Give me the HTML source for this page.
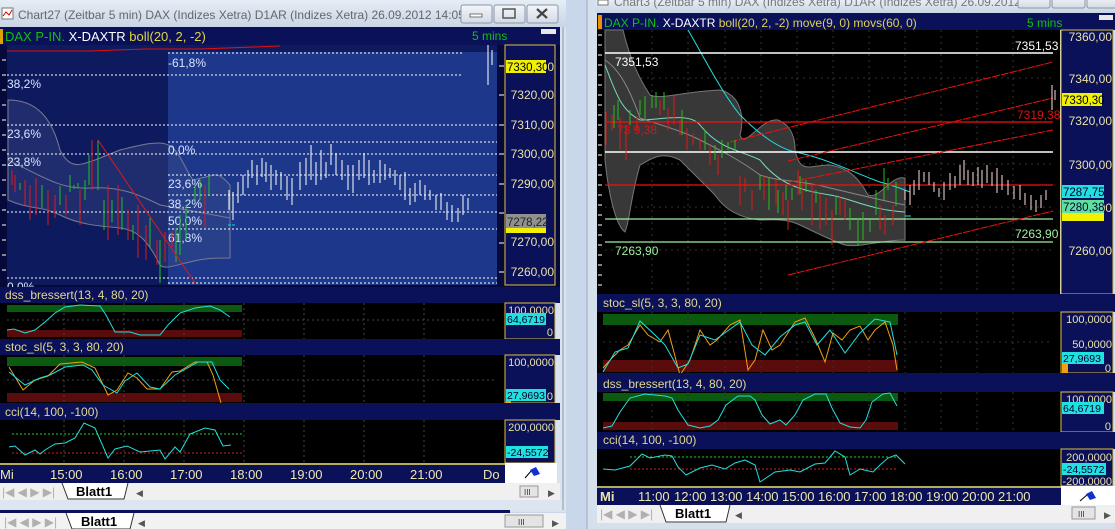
<!DOCTYPE html>
<html><head><meta charset="utf-8"><style>
html,body{margin:0;padding:0;width:1115px;height:529px;overflow:hidden;background:#c9d8ea}
svg{display:block}
text{font-family:"Liberation Sans",sans-serif}
</style></head><body>
<svg width="1115" height="529" viewBox="0 0 1115 529" xmlns="http://www.w3.org/2000/svg">
<defs>
<linearGradient id="tb" x1="0" y1="0" x2="0" y2="1"><stop offset="0" stop-color="#e6edf5"/><stop offset="1" stop-color="#c8d5e5"/></linearGradient>
<linearGradient id="btn" x1="0" y1="0" x2="0" y2="1"><stop offset="0" stop-color="#f4f6f9"/><stop offset="1" stop-color="#d3dbe6"/></linearGradient>
</defs>
<rect x="0" y="0" width="1115" height="529" fill="#c8d7ea"/>

<!-- ============ LEFT WINDOW ============ -->
<rect x="0" y="0" width="566" height="512" fill="#d9e3ef"/>
<rect x="0" y="0" width="566" height="27" fill="url(#tb)"/>
<rect x="2" y="8" width="11" height="11" fill="#fff" stroke="#777"/>
<path d="M3 16 L6 12 L9 15 L12 10" stroke="#c00" fill="none"/>
<text x="18" y="19" font-size="12" fill="#666">Chart27 (Zeitbar 5 min)  DAX (Indizes Xetra) D1AR (Indizes Xetra) 26.09.2012 14:05 ...</text>
<rect x="461" y="5" width="31" height="18" rx="2" fill="url(#btn)" stroke="#8a97a8"/>
<rect x="470" y="14" width="12" height="3" fill="#fff" stroke="#555" stroke-width="0.8"/>
<rect x="494" y="5" width="31" height="18" rx="2" fill="url(#btn)" stroke="#8a97a8"/>
<rect x="503" y="9" width="12" height="9" fill="none" stroke="#555" stroke-width="1.5"/>
<rect x="527" y="5" width="31" height="18" rx="2" fill="url(#btn)" stroke="#8a97a8"/>
<path d="M537 9 L547 18 M547 9 L537 18" stroke="#444" stroke-width="2.2"/>

<rect x="0" y="27" width="560" height="18" fill="#0b1158"/>
<rect x="0" y="29" width="3" height="15" fill="#e0a000"/>
<text x="5" y="41" font-size="13"><tspan fill="#10c010">DAX P-IN. </tspan><tspan fill="#ffffff">X-DAXTR </tspan><tspan fill="#e0d448">boll(20, 2, -2)</tspan></text>
<text x="472" y="40" font-size="12" fill="#10c010">5 mins</text>
<rect x="541" y="29" width="15" height="5" fill="#e8e8e8"/>

<rect x="0" y="45" width="560" height="242" fill="#060a3a"/>
<rect x="7" y="45" width="490" height="240" fill="#0e1a5e"/>
<rect x="168" y="52" width="329" height="233" fill="#1d388a"/>
<path d="M2 60h4M2 75h4M2 90h4M2 105h4M2 120h4M2 135h4M2 150h4M2 165h4M2 180h4M2 195h4M2 210h4M2 225h4M2 240h4M2 255h4M2 270h4" stroke="#fff"/>
<path d="M8 100 C30 100 50 110 60 150 C70 170 80 165 95 160 L120 150 C140 145 160 140 168 145 C180 150 185 170 193 180 L210 176 C220 172 225 180 230 185 L230 258 C215 258 205 258 190 262 C175 265 165 270 160 265 C150 245 140 230 120 228 C100 226 80 225 60 215 C40 205 30 210 8 200 Z" fill="#3a4a8a" fill-opacity="0.4" stroke="#7a7a90"/>
<path d="M8 160 C40 175 60 190 90 188 C120 186 140 195 160 205 L230 218" stroke="#7a7a90" fill="none"/>
<g stroke="#ffffff" stroke-dasharray="2 2">
<path d="M168 53H463M7 75H463M7 125H497M168 142H497M7 154H497M168 175H497M168 195H497M7 212H497M168 229H497M7 278H497M168 283H497"/>
</g>
<path d="M7 51H90L145 49H200L280 46" stroke="#e01010" fill="none" stroke-width="1"/>
<g font-size="12" fill="#d8e4ff">
<text x="168" y="67">-61,8%</text><text x="7" y="88">38,2%</text><text x="7" y="138">23,6%</text>
<text x="168" y="154">0,0%</text><text x="7" y="166">23,8%</text><text x="168" y="188">23,6%</text>
<text x="168" y="208">38,2%</text><text x="168" y="225">50,0%</text><text x="168" y="242">61,8%</text>
<text x="7" y="291">0,0%</text>
</g>
<path d="M12 170V185M15 175V192M25 180V205M30 185V220M36 178V215M48 190V225M55 195V218M66 195V215M80 190V225M92 140V190M108 185V240M118 185V235M128 210V240M138 205V258M146 225V260M157 240V265M165 232V262M172 232V247M205 185V228" stroke="#e01818"/>
<path d="M20 183V190M42 185V208M60 186V205M70 175V192M85 180V200M89 155V185M98 140V190M78 183V188M74 185V189M104 200V230M112 200V222M122 197V230M133 225V240M150 218V248M160 240V283M176 228V262M180 215V255M186 205V240M195 185V200M200 180V200M209 175V195" stroke="#20c020"/>
<path d="M98 140 L195 283" stroke="#e01818"/>
<g stroke="#ffffff">
<path d="M229 190V210M233 192V220M238 182V203M243 175V195M248 170V188M252 160V178M257 165V185M262 158V177M266 162V182M271 165V190M276 170V185M281 172V190M287 176V200M292 178V205M300 162V190M306 158V185M311 145V180M316 162V185M321 150V180M326 162V178M331 144V165M336 153V175M342 160V180M348 165V190M353 165V193M359 160V180M364 153V178M369 160V185M374 170V183M380 160V183M385 164V180M390 168V178M395 170V185M400 175V190M405 172V200M410 188V205M415 183V202M420 180V195M425 185V200M430 190V200M436 195V210M441 193V210M447 202V220M452 205V222M458 208V222M463 195V215M468 198V210M488 45V85M492 50V65" />
</g>
<path d="M228 225h3M232 225h3" stroke="#00e0e0"/>
<rect x="505" y="45" width="50" height="240" fill="#0b1158" stroke="#e0c040"/>
<path d="M499 66h5M499 95h5M499 125h5M499 154h5M499 184h5M499 213h5M499 243h5M499 272h5" stroke="#fff"/>
<g font-size="12" fill="#e8e0a8" text-anchor="end">
<text x="554" y="71">7330,00</text>
<text x="554" y="99">7320,00</text><text x="554" y="129">7310,00</text><text x="554" y="158">7300,00</text>
<text x="554" y="188">7290,00</text><text x="554" y="246">7270,00</text><text x="554" y="276">7260,00</text>
</g>
<rect x="506" y="60" width="40" height="13" fill="#f0f000"/>
<text x="507" y="71" font-size="11.5" fill="#000">7330,30</text>
<rect x="506" y="214" width="40" height="14" fill="#909090"/>
<rect x="506" y="228" width="40" height="5" fill="#f0f000"/>
<text x="507" y="226" font-size="11.5" fill="#222">7278,22</text>

<rect x="0" y="287" width="560" height="16" fill="#0b1158"/>
<text x="5" y="299" font-size="12" fill="#e0d890">dss_bressert(13, 4, 80, 20)</text>
<rect x="0" y="303" width="505" height="36" fill="#000"/>
<rect x="7" y="305" width="235" height="7" fill="#0b5a10"/>
<rect x="7" y="330" width="235" height="7" fill="#5a0c0c"/>
<g stroke="#444" stroke-dasharray="2 3"><path d="M64 303V339M124 303V339M184 303V339M244 303V339M304 303V339M364 303V339M424 303V339M7 320H497"/></g>
<path d="M7 330 L14 329 L25 333 L35 330 L45 322 L55 313 L65 307 L80 305 L100 306 L106 315 L115 332 L130 332 L140 335 L160 335 L168 325 L180 313 L195 308 L210 306 L220 310 L230 317" stroke="#20e0e0" fill="none"/>
<rect x="505" y="303" width="50" height="36" fill="#0b1158" stroke="#e0c040"/>
<text x="554" y="314" font-size="11" fill="#e8e0a8" text-anchor="end">100,0000</text>
<rect x="506" y="313" width="40" height="12" fill="#20e0e0"/>
<text x="507" y="323" font-size="10.5" fill="#002">64,6719</text>
<text x="553" y="336" font-size="11" fill="#e8e0a8" text-anchor="end">0</text>

<rect x="0" y="339" width="560" height="16" fill="#0b1158"/>
<text x="5" y="351" font-size="12" fill="#e0d890">stoc_sl(5, 3, 3, 80, 20)</text>
<rect x="0" y="355" width="505" height="48" fill="#000"/>
<rect x="7" y="357" width="235" height="9" fill="#0b5a10"/>
<rect x="7" y="393" width="235" height="9" fill="#5a0c0c"/>
<g stroke="#444" stroke-dasharray="2 3"><path d="M64 355V403M124 355V403M184 355V403M244 355V403M304 355V403M364 355V403M424 355V403M7 380H497"/></g>
<path d="M9 367 L23 390 L35 380 L48 376 L60 364 L82 362 L95 368 L108 395 L117 390 L128 373 L137 378 L147 389 L160 389 L172 372 L180 371 L195 362 L207 362 L213 375 L221 403" stroke="#f0a010" fill="none"/>
<path d="M9 372 L25 385 L40 378 L50 375 L65 367 L83 365 L92 370 L103 385 L117 393 L125 381 L137 373 L150 387 L160 389 L175 375 L198 362 L212 362 L220 380 L229 389" stroke="#20e0e0" fill="none"/>
<rect x="505" y="355" width="50" height="48" fill="#0b1158" stroke="#e0c040"/>
<text x="554" y="366" font-size="11" fill="#e8e0a8" text-anchor="end">100,0000</text>
<rect x="506" y="389" width="40" height="12" fill="#20e0e0"/>
<text x="507" y="399" font-size="10.5" fill="#002">27,9693</text>
<rect x="506" y="401" width="5" height="4" fill="#f0a010"/>
<text x="553" y="400" font-size="11" fill="#e8e0a8" text-anchor="end">0</text>

<rect x="0" y="403" width="560" height="17" fill="#0b1158"/>
<text x="5" y="416" font-size="12" fill="#e0d890">cci(14, 100, -100)</text>
<rect x="0" y="420" width="505" height="43" fill="#000"/>
<g stroke="#444" stroke-dasharray="2 3"><path d="M64 420V463M124 420V463M184 420V463M244 420V463M304 420V463M364 420V463M424 420V463"/></g>
<path d="M12 434H242" stroke="#20d020" stroke-dasharray="2 2"/>
<path d="M12 453H242" stroke="#d02020" stroke-dasharray="2 2"/>
<path d="M9 447 L15 446 L25 455 L35 450 L40 454 L45 450 L55 444 L65 443 L75 438 L84 423 L95 428 L108 458 L115 449 L127 446 L140 452 L150 451 L160 450 L165 459 L175 447 L180 452 L190 434 L205 428 L215 430 L223 446 L231 445" stroke="#20e0e0" fill="none"/>
<rect x="505" y="420" width="50" height="43" fill="#0b1158" stroke="#e0c040"/>
<text x="554" y="431" font-size="11" fill="#e8e0a8" text-anchor="end">200,0000</text>
<rect x="506" y="446" width="42" height="12" fill="#20e0e0"/>
<text x="507" y="456" font-size="10.5" fill="#002">-24,5572</text>

<rect x="0" y="463" width="505" height="20" fill="#0b1158"/>
<path d="M0 464H505" stroke="#f0e060" stroke-width="1.5"/>
<g font-size="13" fill="#ece6b0">
<text x="0" y="479">Mi</text><text x="50" y="479">15:00</text><text x="110" y="479">16:00</text><text x="170" y="479">17:00</text>
<text x="230" y="479">18:00</text><text x="290" y="479">19:00</text><text x="350" y="479">20:00</text><text x="410" y="479">21:00</text><text x="483" y="479">Do</text>
</g>
<rect x="505" y="463" width="52" height="20" fill="#fff"/>
<path d="M525 478 L532 470" stroke="#000"/><path d="M530 470 L536 467 L540 474 L534 476 Z" fill="#1030d0"/>

<rect x="0" y="483" width="560" height="17" fill="#f0f0f0"/>
<g fill="#b0b0b0" font-size="12"><text x="2" y="496">|◀ ◀ ▶ ▶|</text></g>
<path d="M62 483 L68 499 L124 499 L128 483" fill="#fff" stroke="#333"/>
<text x="76" y="496" font-size="13" font-weight="bold" fill="#000">Blatt1</text>
<text x="136" y="496" font-size="9" fill="#555">◀</text>
<rect x="520" y="486" width="18" height="11" fill="#e4e4e4" stroke="#999"/>
<text x="524" y="495" font-size="8" fill="#333">III</text>
<text x="548" y="496" font-size="9" fill="#555">▶</text>
<rect x="0" y="500" width="566" height="10" fill="#dde6f0"/>
<path d="M563 27V510" stroke="#8a97a8"/>
<rect x="0" y="510" width="510" height="3" fill="#0b1158"/>
<rect x="0" y="513" width="566" height="16" fill="#f2f2f2"/>
<g fill="#b0b0b0" font-size="12"><text x="4" y="526">|◀ ◀ ▶ ▶|</text></g>
<path d="M66 513 L72 529 L130 529 L134 513" fill="#fff" stroke="#333"/>
<text x="81" y="526" font-size="13" font-weight="bold" fill="#000">Blatt1</text>
<text x="138" y="526" font-size="9" fill="#555">◀</text>
<rect x="505" y="515" width="38" height="12" fill="#e4e4e4" stroke="#999"/>
<text x="518" y="525" font-size="8" fill="#333">III</text>
<text x="552" y="526" font-size="9" fill="#555">▶</text>

<!-- ============ RIGHT WINDOW ============ -->
<rect x="587" y="0" width="528" height="529" fill="#d6e0ec"/>
<path d="M587 0V529" stroke="#9aaabb"/>
<rect x="596" y="0" width="519" height="13" fill="url(#tb)"/>
<rect x="598" y="0" width="10" height="5" fill="#fff" stroke="#777"/>
<text x="614" y="6" font-size="12" fill="#777">Chart3 (Zeitbar 5 min)  DAX (Indizes Xetra) D1AR (Indizes Xetra) 26.09.2012...</text>
<rect x="1018" y="-4" width="32" height="12" rx="2" fill="url(#btn)" stroke="#8a97a8"/>
<rect x="1052" y="-4" width="33" height="12" rx="2" fill="url(#btn)" stroke="#8a97a8"/>
<rect x="1087" y="-4" width="30" height="12" rx="2" fill="url(#btn)" stroke="#8a97a8"/>
<rect x="597" y="13" width="518" height="17" fill="#0b1158"/>
<rect x="598" y="15" width="4" height="14" fill="#f09000"/>
<text x="604" y="27" font-size="12"><tspan fill="#10c010">DAX P-IN. </tspan><tspan fill="#fff">X-DAXTR </tspan><tspan fill="#e0d448">boll(20, 2, -2) move(9, 0) movs(60, 0)</tspan></text>
<text x="1027" y="27" font-size="12" fill="#10c010">5 mins</text>
<rect x="1099" y="15" width="14" height="5" fill="#e8e8e8"/>
<rect x="597" y="30" width="463" height="264" fill="#000"/>
<path d="M598 35h4M598 45h4M598 55h4M598 65h4M598 75h4M598 85h4M598 95h4M598 105h4M598 115h4M598 125h4M598 135h4M598 145h4M598 155h4M598 165h4M598 175h4M598 185h4M598 195h4M598 205h4M598 215h4M598 225h4M598 235h4M598 245h4M598 255h4M598 265h4M598 275h4M598 285h4" stroke="#fff"/>
<g stroke="#333" stroke-dasharray="2 4"><path d="M652 30V293M688 30V293M725 30V293M761 30V293M797 30V293M833 30V293M869 30V293M905 30V293M941 30V293M977 30V293M1013 30V293M605 78H1053M605 164H1053M605 207H1053M605 250H1053"/></g>
<path d="M623 30 C630 60 640 80 650 95 C660 100 680 92 720 90 C740 95 745 115 740 135 C745 150 760 118 778 120 C790 125 795 135 795 150 C800 175 810 165 830 165 C850 168 860 180 868 195 C880 200 890 175 905 178 L905 240 C880 240 860 248 845 245 C830 240 815 232 800 225 C785 218 770 220 760 220 C740 218 725 210 715 195 C700 180 690 170 680 160 C660 150 650 160 640 165 C630 200 630 220 625 232 C615 225 608 190 605 160 L605 30 Z" fill="#383838" stroke="#777"/>
<path d="M605 65 C615 90 620 110 640 120 C660 120 690 112 700 125 C720 150 740 150 760 160 C780 185 800 190 830 195 C850 198 870 210 905 212" stroke="#70e0c0" fill="none"/>
<path d="M605 60 C620 70 630 90 640 118 C660 125 680 130 700 140 C720 150 740 160 760 175 C780 182 800 180 830 188 C860 195 880 200 905 205" stroke="#888" fill="none"/>
<path d="M688 30 C700 50 720 90 740 115 C760 135 780 150 800 153 C830 160 860 175 880 182 C895 186 905 190 910 192" stroke="#20e0e0" fill="none"/>
<path d="M605 53H1053M605 152H1053" stroke="#fff" stroke-width="1.5"/>
<path d="M605 122H1053M605 185H1053" stroke="#f01010" stroke-width="1.3"/>
<path d="M605 219H1053M605 242H1053" stroke="#a0f0a0" stroke-width="1.3"/>
<g stroke="#f01010" stroke-dasharray="8 1"><path d="M788 275L1053 211M730 142L1053 62M788 161L1053 98M790 182L1053 130"/></g>
<g font-size="12">
<text x="1015" y="50" fill="#fff">7351,53</text><text x="615" y="66" fill="#fff">7351,53</text>
<text x="1017" y="119" fill="#e01010">7319,38</text><text x="617" y="134" fill="#e01010">73 9,38</text>
<text x="1015" y="238" fill="#a0f0a0">7263,90</text><text x="615" y="255" fill="#a0f0a0">7263,90</text>
</g>
<path d="M606 112V145M612 115V130M620 118V150M626 125V160M637 116V130M660 100V115M668 108V130M674 96V125M680 120V135M687 128V150M693 133V145M700 138V150M710 145V165M718 155V175M740 176V205M745 178V192M752 190V210M764 175V200M776 180V205M783 192V215M788 200V230M798 170V195M802 178V210M812 183V225M820 194V230M826 198V225M832 210V245M840 196V215M845 200V220M880 205V230M885 215V235M893 205V225" stroke="#e01818"/>
<path d="M614 105V128M618 100V120M630 110V125M640 100V115M645 96V120M652 95V108M656 92V108M664 92V110M682 110V135M705 130V150M715 145V160M722 140V158M728 142V150M735 140V152M760 175V190M769 178V210M778 190V213M786 185V200M792 188V200M800 176V194M806 180V192M816 190V203M836 196V215M850 208V230M858 218V245M863 212V240M870 220V232M876 190V215M884 168V200M888 178V190M896 182V206" stroke="#20c020"/>
<g stroke="#ffdede"><path d="M905 190V200M910 185V205M914 180V195M919 170V190M924 172V182M929 172V185M934 182V192M939 188V197M944 182V200M950 173V190M955 176V188M960 165V185M964 160V180M968 170V185M973 172V186M978 167V185M982 170V188M987 165V183M992 172V186M997 168V193M1002 175V190M1008 180V195M1014 186V199M1020 185V200M1025 193V205M1031 195V210M1036 200V212M1041 195V208M1046 190V200M1052 85V110M1055 90V100"/></g>
<path d="M905 216h6" stroke="#20e0e0"/>
<rect x="1061" y="30" width="52" height="264" fill="#0b1158" stroke="#e0c040"/>
<g font-size="12" fill="#e8e0a8" text-anchor="end">
<text x="1112" y="41">7360,00</text><text x="1112" y="83">7340,00</text><text x="1112" y="125">7320,00</text>
<text x="1112" y="169">7300,00</text><text x="1112" y="212">7280,00</text><text x="1112" y="255">7260,00</text>
</g>
<rect x="1062" y="93" width="40" height="13" fill="#f0f000"/><text x="1063" y="104" font-size="11.5" fill="#000">7330,30</text>
<rect x="1062" y="185" width="42" height="13" fill="#20e0e0"/><text x="1063" y="196" font-size="11.5" fill="#003">7287,75</text>
<rect x="1062" y="200" width="42" height="13" fill="#60e0a0"/><text x="1063" y="211" font-size="11.5" fill="#003">7280,38</text>
<rect x="1062" y="213" width="42" height="8" fill="#f0f000"/>

<rect x="597" y="294" width="518" height="18" fill="#0b1158"/>
<text x="603" y="307" font-size="12" fill="#e0d890">stoc_sl(5, 3, 3, 80, 20)</text>
<rect x="597" y="312" width="464" height="61" fill="#000"/>
<rect x="603" y="314" width="295" height="11" fill="#0b5a10"/>
<rect x="603" y="360" width="295" height="12" fill="#5a0c0c"/>
<g stroke="#333" stroke-dasharray="2 4"><path d="M652 312V373M688 312V373M725 312V373M761 312V373M797 312V373M833 312V373M869 312V373M905 312V373M941 312V373M977 312V373M1013 312V373M603 342H1053"/></g>
<path d="M603 368 L612 358 L620 350 L628 345 L640 325 L648 335 L660 342 L668 330 L680 375 L690 360 L700 330 L710 345 L717 340 L730 325 L740 320 L748 370 L755 360 L763 330 L772 350 L780 345 L795 322 L805 318 L815 338 L825 362 L833 333 L842 340 L850 330 L860 326 L868 340 L875 330 L885 322 L893 345 L897 370" stroke="#f0a010" fill="none"/>
<path d="M603 372 L615 352 L628 348 L640 321 L655 335 L665 345 L678 368 L688 364 L700 335 L715 340 L740 322 L752 345 L765 355 L780 337 L795 325 L805 322 L817 345 L830 330 L845 353 L860 333 L875 319 L890 322 L897 355" stroke="#20e0e0" fill="none"/>
<rect x="1061" y="312" width="52" height="61" fill="#0b1158" stroke="#e0c040"/>
<text x="1112" y="323" font-size="11" fill="#e8e0a8" text-anchor="end">100,0000</text>
<text x="1112" y="348" font-size="11" fill="#e8e0a8" text-anchor="end">50,0000</text>
<rect x="1062" y="352" width="42" height="12" fill="#20e0e0"/><text x="1063" y="362" font-size="10.5" fill="#003">27,9693</text>
<rect x="1062" y="364" width="6" height="9" fill="#f0a010"/>
<text x="1111" y="372" font-size="11" fill="#e8e0a8" text-anchor="end">0</text>

<rect x="597" y="373" width="518" height="19" fill="#0b1158"/>
<text x="603" y="388" font-size="12" fill="#e0d890">dss_bressert(13, 4, 80, 20)</text>
<rect x="597" y="392" width="464" height="40" fill="#000"/>
<rect x="603" y="393" width="295" height="8" fill="#0b5a10"/>
<rect x="603" y="422" width="295" height="8" fill="#5a0c0c"/>
<g stroke="#333" stroke-dasharray="2 4"><path d="M652 392V432M688 392V432M725 392V432M761 392V432M797 392V432M833 392V432M869 392V432M905 392V432M941 392V432M977 392V432M1013 392V432"/></g>
<path d="M603 428 L612 426 L620 412 L630 398 L645 394 L665 396 L672 398 L678 410 L688 425 L700 428 L710 426 L718 420 L726 405 L738 396 L750 396 L755 400 L762 415 L770 424 L780 420 L786 425 L795 415 L803 400 L815 394 L826 394 L832 408 L840 423 L850 427 L860 428 L866 420 L872 402 L883 394 L890 393 L897 406" stroke="#20e0e0" fill="none"/>
<rect x="1061" y="392" width="52" height="40" fill="#0b1158" stroke="#e0c040"/>
<text x="1112" y="403" font-size="11" fill="#e8e0a8" text-anchor="end">100,0000</text>
<rect x="1062" y="402" width="42" height="12" fill="#20e0e0"/><text x="1063" y="412" font-size="10.5" fill="#003">64,6719</text>
<text x="1111" y="430" font-size="11" fill="#e8e0a8" text-anchor="end">0</text>

<rect x="597" y="432" width="518" height="17" fill="#0b1158"/>
<text x="603" y="444" font-size="12" fill="#e0d890">cci(14, 100, -100)</text>
<rect x="597" y="449" width="464" height="37" fill="#000"/>
<path d="M630 457H896" stroke="#20d020" stroke-dasharray="2 2"/>
<path d="M630 469H896" stroke="#d02020" stroke-dasharray="2 2"/>
<path d="M603 469 L615 470 L630 466 L642 454 L650 458 L665 455 L672 456 L678 467 L686 475 L700 468 L712 465 L725 469 L735 463 L745 460 L755 465 L760 482 L775 472 L790 470 L800 472 L815 464 L825 463 L835 451 L845 457 L850 475 L860 469 L873 472 L880 465 L888 458 L896 455 L905 464" stroke="#20e0e0" fill="none"/>
<rect x="1061" y="449" width="52" height="37" fill="#0b1158" stroke="#e0c040"/>
<text x="1112" y="461" font-size="11" fill="#e8e0a8" text-anchor="end">200,0000</text>
<rect x="1062" y="463" width="44" height="12" fill="#20e0e0"/><text x="1063" y="473" font-size="10.5" fill="#003">-24,5572</text>
<text x="1112" y="485" font-size="11" fill="#e8e0a8" text-anchor="end">-200,0000</text>

<rect x="597" y="486" width="464" height="19" fill="#0b1158"/>
<path d="M597 487H1061" stroke="#f0e060" stroke-width="1.5"/>
<g font-size="13" fill="#ece6b0">
<text x="600" y="501" font-weight="bold">Mi</text>
<text x="638" y="501">11:00</text><text x="674" y="501">12:00</text><text x="710" y="501">13:00</text><text x="746" y="501">14:00</text>
<text x="782" y="501">15:00</text><text x="818" y="501">16:00</text><text x="854" y="501">17:00</text><text x="890" y="501">18:00</text>
<text x="926" y="501">19:00</text><text x="962" y="501">20:00</text><text x="998" y="501">21:00</text>
</g>
<rect x="1061" y="486" width="54" height="19" fill="#fff"/>
<path d="M1080 501 L1088 494" stroke="#000"/><path d="M1086 494 L1092 491 L1096 498 L1090 500 Z" fill="#1030d0"/>
<rect x="597" y="505" width="518" height="18" fill="#f0f0f0"/>
<g fill="#b0b0b0" font-size="12"><text x="600" y="518">|◀ ◀ ▶ ▶|</text></g>
<path d="M660 505 L666 522 L726 522 L730 505" fill="#fff" stroke="#333"/>
<text x="675" y="518" font-size="13" font-weight="bold" fill="#000">Blatt1</text>
<text x="735" y="518" font-size="9" fill="#555">◀</text>
<rect x="1072" y="507" width="23" height="12" fill="#e4e4e4" stroke="#999"/>
<text x="1078" y="517" font-size="8" fill="#333">III</text>
<text x="1104" y="518" font-size="9" fill="#555">▶</text>
<rect x="597" y="523" width="518" height="6" fill="#d6e0ec"/>
</svg>
</body></html>
